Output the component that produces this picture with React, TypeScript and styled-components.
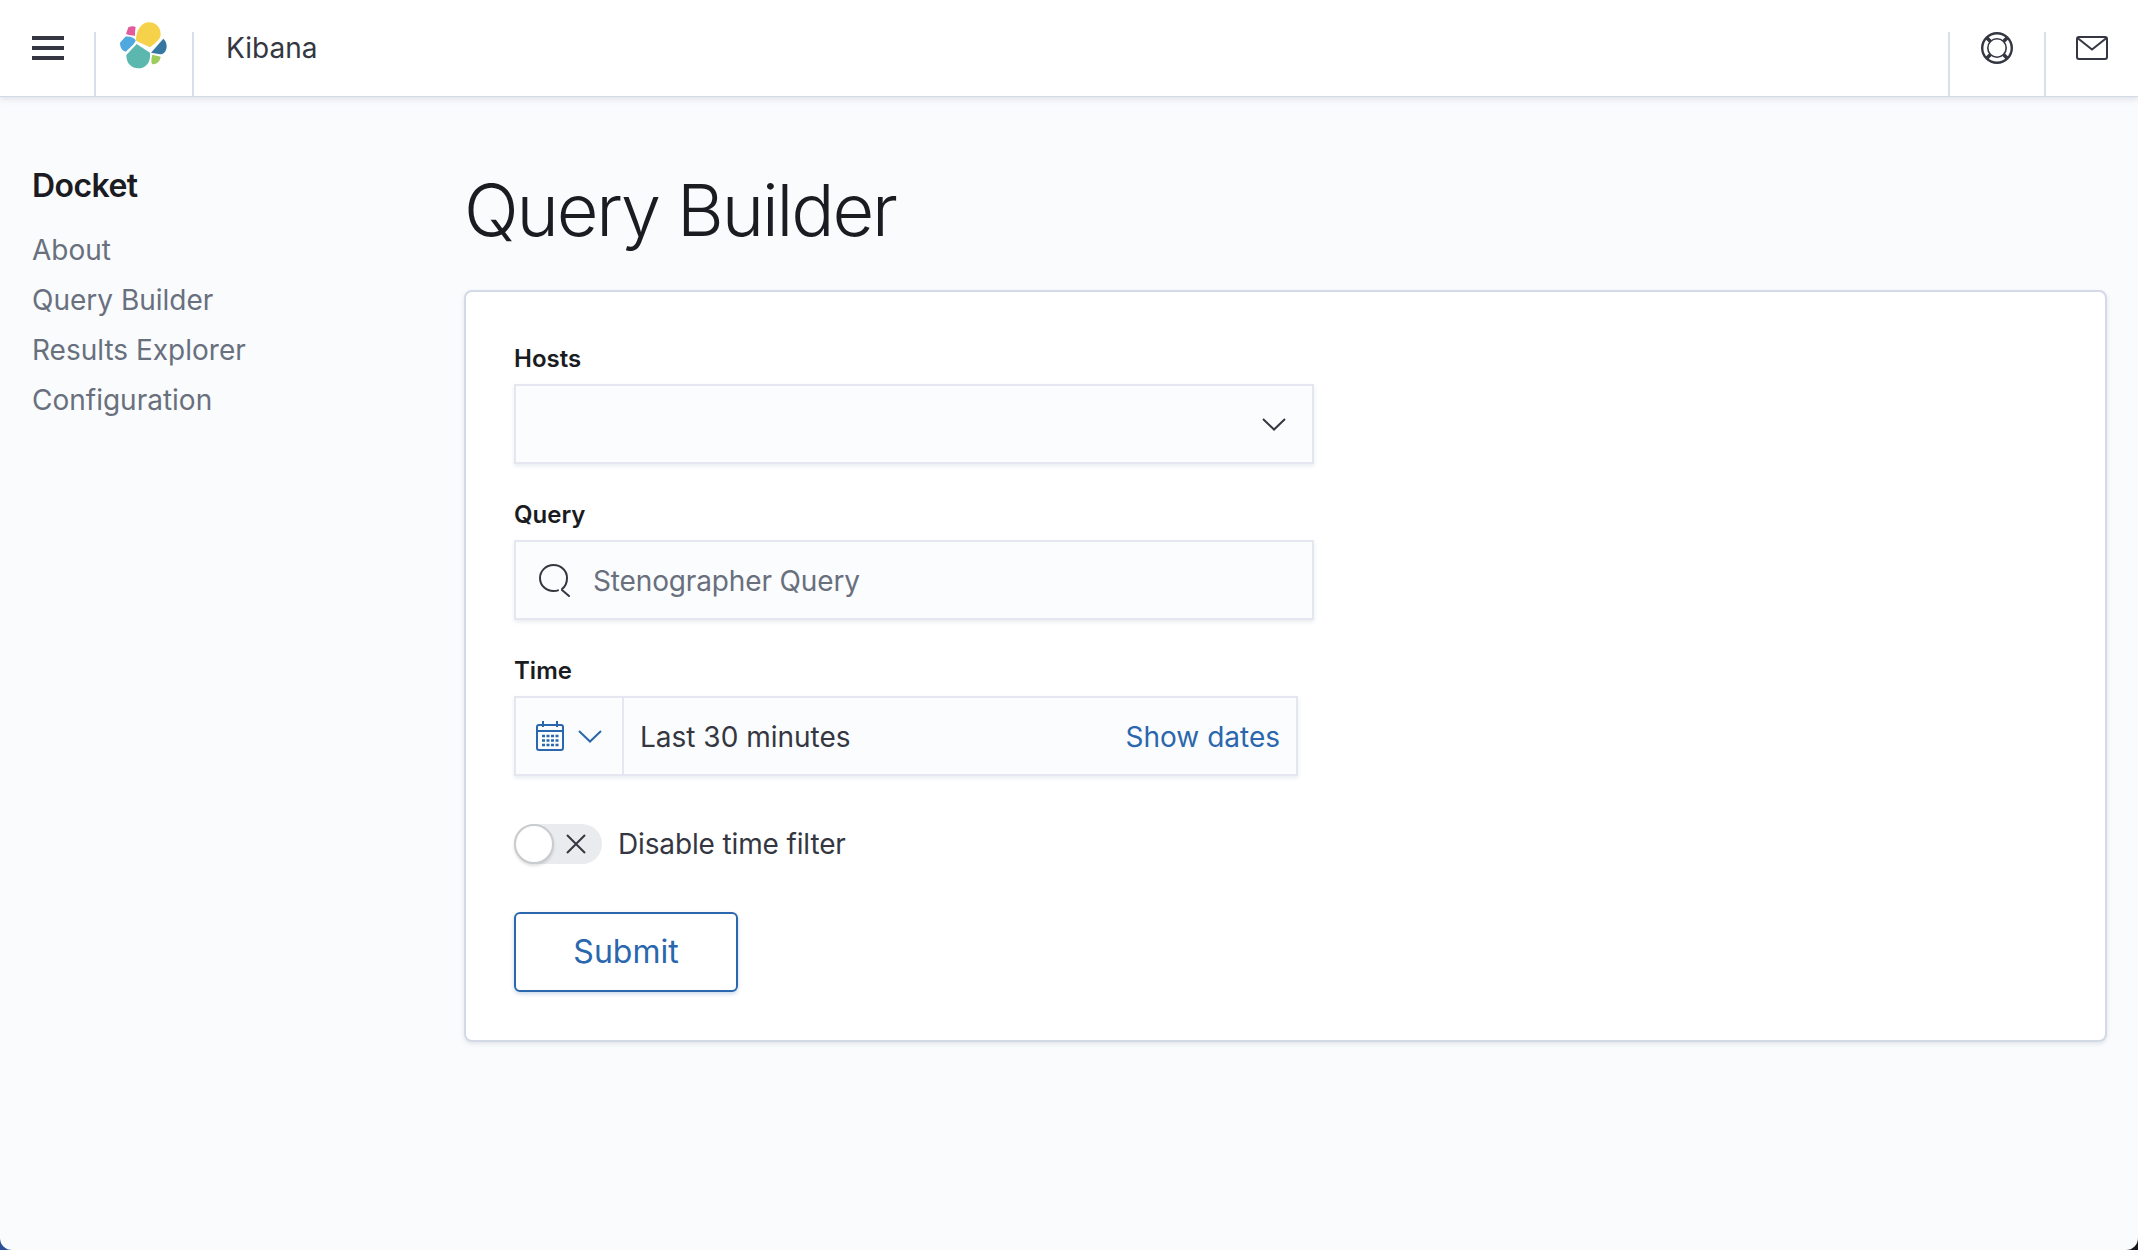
import styled, { createGlobalStyle } from "styled-components";

const GlobalStyle = createGlobalStyle`
  html, body {
    margin: 0;
    padding: 0;
    height: 100%;
    background: linear-gradient(to right, #2c4f96 0%, #2c4f96 50%, #16181d 50%, #16181d 100%);
  }
  * {
    box-sizing: border-box;
  }
`;

const Page = styled.div`
  width: 2138px;
  height: 1250px;
  overflow: hidden;
  display: flex;
  flex-direction: column;
  background: #fafbfd;
  border-radius: 0 0 12px 12px;
  font-family: Inter, "Noto Sans", sans-serif;
  color: #343741;
`;

const Header = styled.header`
  height: 97px;
  flex: none;
  display: flex;
  background: #fff;
  border-bottom: 1px solid #d3dae6;
  box-shadow: 0 2px 6px rgba(152, 162, 179, 0.3);
  position: relative;
`;

const HeaderCell = styled.div<{ $width: number; $logo?: boolean }>`
  width: ${(p) => p.$width}px;
  height: 96px;
  flex: none;
  display: flex;
  align-items: center;
  justify-content: center;
  padding: ${(p) => (p.$logo ? "0 0 6px 2px" : "0")};
`;

const MenuCell = styled(HeaderCell)`
  justify-content: flex-start;
  padding-left: 32px;
`;

const Divider = styled.div`
  width: 2px;
  height: 64px;
  flex: none;
  align-self: flex-end;
  background: #d8deea;
`;

const AppName = styled.div`
  margin-left: 32px;
  height: 96px;
  line-height: 96px;
  font-size: 28px;
  flex: 1;
`;

const Body = styled.div`
  flex: 1;
  display: flex;
`;

const Sidebar = styled.nav`
  width: 464px;
  flex: none;
  padding: 65px 0 0 32px;
`;

const SideTitle = styled.h2`
  margin: 0 0 15px;
  font-size: 32px;
  line-height: 48px;
  font-weight: 600;
  letter-spacing: -0.018em;
  color: #1a1c21;
`;

const SideLink = styled.a`
  display: block;
  font-size: 28px;
  line-height: 50px;
  color: #69707d;
`;

const Content = styled.main`
  width: 1643px;
  flex: none;
  padding-top: 68px;
`;

const Title = styled.h1`
  margin: 0 0 35px;
  font-size: 72px;
  line-height: 90px;
  font-weight: 300;
  letter-spacing: -0.03em;
  color: #1a1c21;
`;

const Panel = styled.section`
  background: #fff;
  border: 2px solid #d3dae6;
  border-radius: 8px;
  box-shadow: 0 2px 4px rgba(152, 162, 179, 0.25);
  padding: 48px;
  display: flex;
  flex-direction: column;
  align-items: flex-start;
  height: 752px;
`;

const Field = styled.div`
  margin-bottom: 32px;
  &:nth-of-type(3) {
    margin-bottom: 48px;
  }
`;

const Label = styled.label`
  display: block;
  height: 44px;
  font-size: 24px;
  line-height: 38px;
  font-weight: 600;
  color: #1a1c21;
`;

const Control = styled.div<{ $width: number }>`
  width: ${(p) => p.$width}px;
  height: 80px;
  display: flex;
  align-items: center;
  background: #fbfcfd;
  border: 2px solid #e4e7f0;
  box-shadow: 0 2px 4px rgba(152, 162, 179, 0.22);
  font-size: 28px;
`;

const SelectBox = styled(Control)`
  justify-content: flex-end;
  padding-right: 26px;
`;

const Placeholder = styled.span`
  margin-left: 21px;
  padding-top: 2px;
  color: #69707d;
  letter-spacing: -0.005em;
`;

const SearchBox = styled(Control)`
  padding-left: 22px;
`;

const PickerButton = styled.div`
  width: 108px;
  height: 100%;
  flex: none;
  display: flex;
  align-items: center;
  gap: 14px;
  padding-left: 20px;
  border-right: 2px solid #e4e7f0;
`;

const TimeText = styled.span`
  flex: 1;
  padding: 2px 0 0 16px;
`;

const ShowDates = styled.a`
  padding: 2px 16px 0 0;
  color: #2a67ad;
`;

const ToggleRow = styled.div`
  display: flex;
  align-items: center;
  gap: 16px;
  height: 40px;
  margin-bottom: 48px;
  font-size: 28px;
  letter-spacing: -0.005em;
`;

const Track = styled.div`
  width: 88px;
  height: 40px;
  display: flex;
  align-items: center;
  justify-content: space-between;
  padding-right: 16px;
  background: #e9ebef;
  border-radius: 20px;
`;

const Thumb = styled.div`
  width: 40px;
  height: 40px;
  background: #fff;
  border: 2px solid #c9cbcd;
  border-radius: 50%;
  box-shadow: 0 2px 3px rgba(0, 0, 0, 0.12);
`;

const SubmitButton = styled.button`
  width: 224px;
  height: 80px;
  padding: 0 0 2px;
  background: #fff;
  border: 2px solid #2a67ad;
  border-radius: 6px;
  box-shadow: 0 2px 4px rgba(42, 103, 173, 0.25);
  font-family: inherit;
  font-size: 32px;
  color: #2a67ad;
`;

const Logo = () => (
  <svg width="90" height="70" viewBox="0 0 270 210">
    <path fill="#F6D14A" d="M108 92C108 60 125 37 147 37C170 37 182 55 182 72C182 87 172 94 150 112Z" />
    <path fill="#5CB8AE" d="M79 135L110 102L150 128C153 160 135 175 115 175C95 175 78 160 79 135Z" />
    <path fill="#4FA8DF" d="M60 98L76 80C90 78 100 83 107 90C107 100 90 112 78 125C66 122 60 112 60 98Z" />
    <path fill="#E25C9C" d="M78 72L85 52C95 47 103 48 107 52C105 62 105 70 105 77C95 77 86 75 78 72Z" />
    <path fill="#35779F" d="M153 128L190 86C197 92 200 100 200 110C198 125 192 132 180 133Z" />
    <path fill="#9DCB5C" d="M157 134L182 140C180 155 170 162 158 163C152 160 154 145 157 134Z" />
  </svg>
);

const MenuIcon = () => (
  <svg width="32" height="24" viewBox="0 0 32 24" fill="#343741">
    <rect width="32" height="4" />
    <rect y="10" width="32" height="4" />
    <rect y="20" width="32" height="4" />
  </svg>
);

const HelpIcon = () => (
  <svg width="32" height="32" viewBox="0 0 32 32" fill="none" stroke="#343741">
    <circle cx="16" cy="16" r="14.8" strokeWidth="2.4" />
    <circle cx="16" cy="16" r="9.2" strokeWidth="1.6" />
    <path strokeWidth="3.6" d="M5.5 5.5L9.5 9.5M26.5 5.5L22.5 9.5M5.5 26.5L9.5 22.5M26.5 26.5L22.5 22.5" />
  </svg>
);

const MailIcon = () => (
  <svg width="32" height="24" viewBox="0 0 32 24" fill="none" stroke="#343741" strokeWidth="2">
    <rect x="1" y="1" width="30" height="22" rx="2" />
    <path d="M1.5 2L16 13.5L30.5 2" />
  </svg>
);

const Chevron = ({ color }: { color: string }) => (
  <svg width="24" height="13" viewBox="0 0 24 13" fill="none" stroke={color} strokeWidth="2">
    <path d="M1 1L12 11.5L23 1" />
  </svg>
);

const SearchIcon = () => (
  <svg width="34" height="34" viewBox="0 0 34 34" fill="none" stroke="#343741" strokeWidth="2" strokeLinecap="round">
    <path d="M24 26C28 23 29 19 29 15C29 7.5 23 2 15.5 2C8 2 2 8 2 15C2 22.5 8 28 15.5 28C17.5 28 19 27.8 20 27.4" />
    <path d="M24 27L31 33" />
  </svg>
);

const CalendarIcon = () => (
  <svg width="28" height="30" viewBox="0 0 28 30" fill="none" stroke="#2a67ad" strokeWidth="2">
    <rect x="1" y="4" width="26" height="25" rx="2" />
    <path d="M1 10H27M7 0V6M21 0V6" />
    <path strokeWidth="2.4" strokeDasharray="3 1.5" d="M6 15H23M6 19.5H23M6 24H23" />
  </svg>
);

const CrossIcon = () => (
  <svg width="20" height="20" viewBox="0 0 20 20" fill="none" stroke="#343741" strokeWidth="2">
    <path d="M1 1L19 19M19 1L1 19" />
  </svg>
);

const links = ["About", "Query Builder", "Results Explorer", "Configuration"];

const App = () => {
  return (
    <Page>
      <GlobalStyle />
      <Header>
        <MenuCell $width={94}>
          <MenuIcon />
        </MenuCell>
        <Divider />
        <HeaderCell $width={96} $logo>
          <Logo />
        </HeaderCell>
        <Divider />
        <AppName>Kibana</AppName>
        <Divider />
        <HeaderCell $width={94}>
          <HelpIcon />
        </HeaderCell>
        <Divider />
        <HeaderCell $width={92}>
          <MailIcon />
        </HeaderCell>
      </Header>
      <Body>
        <Sidebar>
          <SideTitle>Docket</SideTitle>
          {links.map((l) => (
            <SideLink key={l}>{l}</SideLink>
          ))}
        </Sidebar>
        <Content>
          <Title>Query Builder</Title>
          <Panel>
            <Field>
              <Label>Hosts</Label>
              <SelectBox $width={800}>
                <Chevron color="#343741" />
              </SelectBox>
            </Field>
            <Field>
              <Label>Query</Label>
              <SearchBox $width={800}>
                <SearchIcon />
                <Placeholder>Stenographer Query</Placeholder>
              </SearchBox>
            </Field>
            <Field>
              <Label>Time</Label>
              <Control $width={784}>
                <PickerButton>
                  <CalendarIcon />
                  <Chevron color="#2a67ad" />
                </PickerButton>
                <TimeText>Last 30 minutes</TimeText>
                <ShowDates>Show dates</ShowDates>
              </Control>
            </Field>
            <ToggleRow>
              <Track>
                <Thumb />
                <CrossIcon />
              </Track>
              Disable time filter
            </ToggleRow>
            <SubmitButton>Submit</SubmitButton>
          </Panel>
        </Content>
      </Body>
    </Page>
  );
};

export default App;
